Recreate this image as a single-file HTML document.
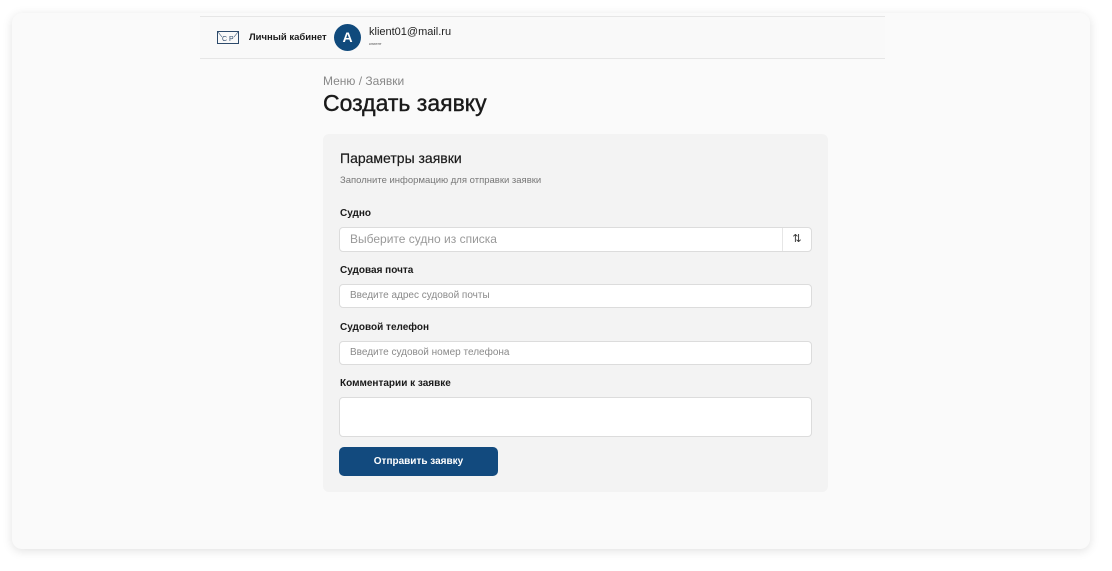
<!DOCTYPE html>
<html><head><meta charset="utf-8"><style>
*{box-sizing:border-box;margin:0;padding:0}
body{width:1112px;height:571px;background:#fff;font-family:"Liberation Sans",sans-serif;position:relative;overflow:hidden}
.frame{position:absolute;left:12px;top:13px;width:1078px;height:536px;background:#fafafa;border-radius:10px;box-shadow:0 2px 10px rgba(0,0,0,.12)}
.hdr{position:absolute;left:200px;top:16px;width:685px;height:43px;border-top:1px solid #e6e6e6;border-bottom:1px solid #e6e6e6;background:#f9f9f9}
.abs{position:absolute}
.card{position:absolute;left:323px;top:134px;width:505px;height:358px;background:#f3f3f3;border-radius:6px}
.lbl{position:absolute;left:340px;font-size:10px;font-weight:bold;color:#1a1a1a}
.inp{position:absolute;left:339px;width:473px;height:24px;background:#fff;border:1px solid #dcdcdc;border-radius:4px;font-size:10px;color:#8a8a8a;padding:0 0 0 10px;line-height:22px}
</style></head><body>
<div class="frame"></div>
<div class="hdr"></div>
<svg class="abs" style="left:217px;top:31px" width="22" height="13" viewBox="0 0 22 13"><rect x="0.5" y="0.5" width="21" height="12" fill="none" stroke="#2d4a6b"/><path d="M1 1 L5 6 M21 1 L17 6" stroke="#2d4a6b" stroke-width=".6"/><text x="5" y="10" font-size="7" fill="#2d4a6b" font-family="Liberation Sans">C P</text></svg>
<div class="abs" style="left:249px;top:32px;font-size:9.5px;font-weight:bold;color:#1a1a1a">Личный кабинет</div>
<div class="abs" style="left:334px;top:24px;width:27px;height:27px;border-radius:50%;background:#104a7c;color:#fff;font-weight:bold;font-size:14px;text-align:center;line-height:27px">A</div>
<div class="abs" style="left:369px;top:26px;font-size:11px;color:#222">klient01@mail.ru</div>
<div class="abs" style="left:369px;top:41px;font-size:4px;color:#555">клиент</div>
<div class="abs" style="left:323px;top:74px;font-size:12px;color:#888">Меню / Заявки</div>
<div class="abs" style="left:323px;top:90px;font-size:23px;color:#1a1a1a;-webkit-text-stroke:0.4px #1a1a1a">Создать заявку</div>
<div class="card"></div>
<div class="abs" style="left:340px;top:150px;font-size:14px;color:#1a1a1a;-webkit-text-stroke:0.2px #1a1a1a">Параметры заявки</div>
<div class="abs" style="left:340px;top:175px;font-size:9.5px;color:#777">Заполните информацию для отправки заявки</div>
<div class="lbl" style="top:208px">Судно</div>
<div class="inp" style="top:227px;height:25px;font-size:12px;line-height:23px;color:#999">Выберите судно из списка</div>
<div class="abs" style="left:782px;top:228px;width:29px;height:23px;border-left:1px solid #e6e6e6;text-align:center;font-size:11px;line-height:23px;color:#333">⇅</div>
<div class="lbl" style="top:265px">Судовая почта</div>
<div class="inp" style="top:284px">Введите адрес судовой почты</div>
<div class="lbl" style="top:322px">Судовой телефон</div>
<div class="inp" style="top:341px">Введите судовой номер телефона</div>
<div class="lbl" style="top:378px">Комментарии к заявке</div>
<div class="inp" style="top:397px;height:40px"></div>
<div class="abs" style="left:339px;top:447px;width:159px;height:29px;background:#124a7e;border-radius:5px;color:#fff;font-size:10px;font-weight:bold;text-align:center;line-height:29px">Отправить заявку</div>
</body></html>
